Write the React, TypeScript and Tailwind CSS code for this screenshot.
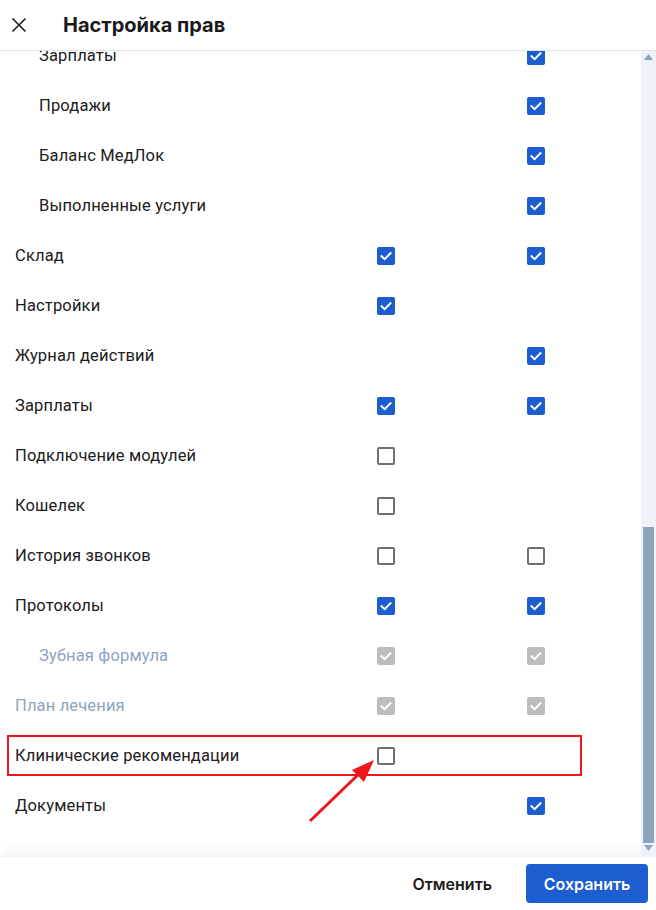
import React from 'react'

type Mark = 'on' | 'off' | 'dis' | null

interface Row {
  label: string
  sub?: boolean
  muted?: boolean
  a: Mark
  b: Mark
  flagged?: boolean
}

const rows: Row[] = [
  { label: 'Зарплаты', sub: true, a: null, b: 'on' },
  { label: 'Продажи', sub: true, a: null, b: 'on' },
  { label: 'Баланс МедЛок', sub: true, a: null, b: 'on' },
  { label: 'Выполненные услуги', sub: true, a: null, b: 'on' },
  { label: 'Склад', a: 'on', b: 'on' },
  { label: 'Настройки', a: 'on', b: null },
  { label: 'Журнал действий', a: null, b: 'on' },
  { label: 'Зарплаты', a: 'on', b: 'on' },
  { label: 'Подключение модулей', a: 'off', b: null },
  { label: 'Кошелек', a: 'off', b: null },
  { label: 'История звонков', a: 'off', b: 'off' },
  { label: 'Протоколы', a: 'on', b: 'on' },
  { label: 'Зубная формула', sub: true, muted: true, a: 'dis', b: 'dis' },
  { label: 'План лечения', muted: true, a: 'dis', b: 'dis' },
  { label: 'Клинические рекомендации', a: 'off', b: null, flagged: true },
  { label: 'Документы', a: null, b: 'on' },
]

function Box({ mark }: { mark: Mark }) {
  if (!mark) return null
  if (mark === 'off') {
    return <div className="w-[18px] h-[18px] rounded-[2px] border-2 border-[#6f6f6f] bg-white" />
  }
  return (
    <div className={`w-[18px] h-[18px] rounded-[2px] flex items-center justify-center ${mark === 'on' ? 'bg-[#1c5ed0]' : 'bg-[#bdbdbd]'}`}>
      <svg width="14" height="14" viewBox="0 0 14 14" fill="none">
        <path d="M2.5 7.2 L5.6 10.2 L11.5 4.2" stroke="white" strokeWidth="2" strokeLinecap="square" />
      </svg>
    </div>
  )
}

export default function App() {
  return (
    <div className="relative w-[656px] h-[910px] bg-white flex flex-col overflow-hidden" style={{ fontFamily: 'Roboto, "Noto Sans", sans-serif' }}>
      <div className="h-[51px] shrink-0 flex items-center border-b border-[#e3e3e3]">
        <button className="ml-[11px] w-[16px] h-[16px] flex items-center justify-center" aria-label="Закрыть">
          <svg width="16" height="16" viewBox="0 0 16 16" fill="none">
            <path d="M1.5 1.5 L14.5 14.5 M14.5 1.5 L1.5 14.5" stroke="#222" strokeWidth="1.7" />
          </svg>
        </button>
        <h1 className="ml-[36px] text-[20px] font-bold text-[#1a1a1a]" style={{ fontFamily: 'Inter, sans-serif' }}>
          Настройка прав
        </h1>
      </div>

      <div className="flex h-[805px] shrink-0">
        <div className="w-[641px] overflow-hidden">
          <div className="-mt-[20px]">
            {rows.map((r, i) => (
              <div key={i} className="relative h-[50px] grid grid-cols-[362px_150px_1fr] items-center pl-[15px]">
                <span className={`text-[16.5px] tracking-[0.15px] leading-[20px] ${r.sub ? 'pl-[24px]' : ''} ${r.muted ? 'text-[#8fa3c1]' : 'text-[#202020]'}`}>
                  {r.label}
                </span>
                <div><Box mark={r.a} /></div>
                <div><Box mark={r.b} /></div>
                {r.flagged && (
                  <div className="absolute left-[7px] top-[4px] w-[575px] h-[41px] border-2 border-[#f0141e] pointer-events-none" />
                )}
              </div>
            ))}
          </div>
        </div>
        <div className="w-[15px] bg-[#eff3f9] relative">
          <svg className="absolute left-[3px] top-[3px]" width="9" height="6" viewBox="0 0 9 6">
            <path d="M4.5 0 L9 6 L0 6 Z" fill="#8fa2bc" />
          </svg>
          <div className="absolute left-[2px] w-[11px] top-[476px] h-[316px] bg-[#8da2bd]" />
          <svg className="absolute left-[3px] bottom-[5px]" width="9" height="6" viewBox="0 0 9 6">
            <path d="M0 0 L9 0 L4.5 6 Z" fill="#8fa2bc" />
          </svg>
        </div>
      </div>

      <div className="flex-1 flex items-center justify-end gap-[34px] pr-[8px] shadow-[0_-6px_10px_rgba(0,0,0,0.04)] border-t border-[#f0f0f0]" style={{ fontFamily: 'Inter, sans-serif' }}>
        <button className="text-[16px] font-semibold text-[#1a1a1a]">Отменить</button>
        <button className="w-[122px] h-[39px] rounded-[4px] bg-[#1c5ed0] text-white text-[16px] font-semibold">Сохранить</button>
      </div>

      <svg className="absolute left-0 top-0 pointer-events-none" width="656" height="910">
        <line x1="310" y1="821" x2="362" y2="771" stroke="#f0141e" strokeWidth="3" />
        <path d="M374 760 L352 770 L364 782 Z" fill="#f0141e" />
      </svg>
    </div>
  )
}
